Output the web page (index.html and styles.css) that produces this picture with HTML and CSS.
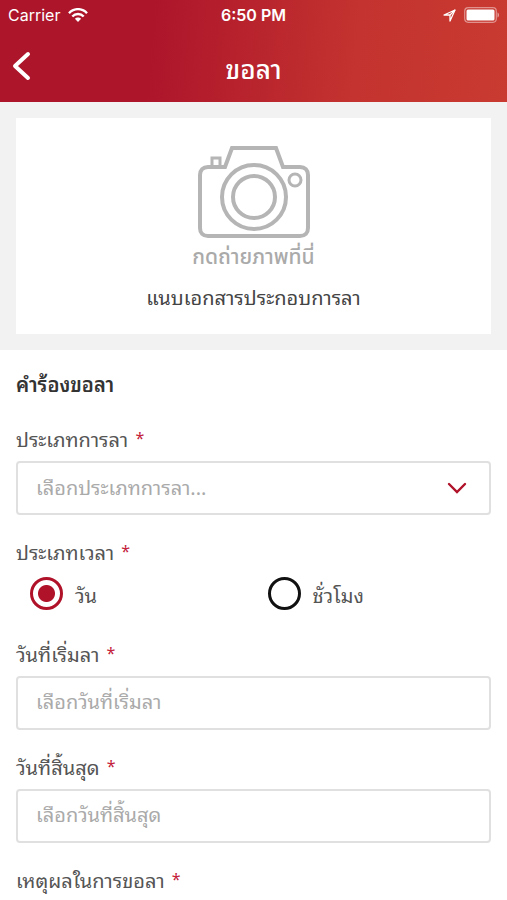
FILE: index.html
```
<!DOCTYPE html>
<html lang="th">
  <head>
    <meta charset="UTF-8" />
    <meta name="viewport" content="width=device-width, initial-scale=1.0" />
    <title>ขอลา</title>
    <link rel="stylesheet" href="styles.css">
  </head>
  <body>
    <header class="header">
      <div class="status-bar">
        <div class="carrier">
          <span>Carrier</span>
          <svg width="20" height="14" viewBox="0 0 20 14" fill="none" stroke="#fff" stroke-width="2.4">
            <path d="M1 5.2C6 -0.2 14 -0.2 19 5.2" />
            <path d="M4.3 8.5C7.4 5.2 12.6 5.2 15.7 8.5" />
            <path d="M10 14L6.9 10.8C8.6 9 11.4 9 13.1 10.8Z" fill="#fff" stroke="none" />
          </svg>
        </div>
        <span class="time">6:50 PM</span>
        <div class="indicators">
          <svg width="13" height="13" viewBox="0 0 13 13" fill="none" stroke="#fff" stroke-width="1.3" stroke-linejoin="round">
            <path d="M12 1L1 6H7V12Z" />
            <path d="M12 1L7 6" />
          </svg>
          <svg width="35" height="16" viewBox="0 0 35 16">
            <rect x="0.7" y="0.7" width="31.6" height="14.6" rx="3.5" fill="none" stroke="#fff" stroke-opacity="0.45" stroke-width="1.2" />
            <rect x="2.5" y="2.5" width="28" height="11" rx="1.5" fill="#fff" />
            <path d="M33.5 5.5C35.5 6 35.5 10 33.5 10.5Z" fill="#fff" fill-opacity="0.5" />
          </svg>
        </div>
      </div>
      <div class="nav-bar">
        <button type="button" class="back" aria-label="กลับ">
          <svg width="20" height="30" viewBox="0 0 20 30" fill="none" stroke="#fff" stroke-width="4" stroke-linecap="round" stroke-linejoin="round">
            <path d="M16 3L3 15L16 27" />
          </svg>
        </button>
        <h1>ขอลา</h1>
      </div>
    </header>

    <main>
      <section class="attach">
        <button type="button" class="attach-card">
          <svg width="112" height="92" viewBox="0 0 112 92" fill="none" stroke="#b5b5b5" stroke-width="4">
            <path d="M10 21H27L34 2H78L85 21H102C107 21 110 24 110 29V82C110 87 107 90 102 90H10C5 90 2 87 2 82V29C2 24 5 21 10 21Z" />
            <path d="M14 21V12H22V21" stroke-width="3" />
            <circle cx="56" cy="51" r="32" />
            <circle cx="56" cy="51" r="21" />
            <circle cx="97" cy="34" r="6" stroke-width="3" />
          </svg>
          <span class="attach-hint">กดถ่ายภาพที่นี่</span>
          <span class="attach-text">แนบเอกสารประกอบการลา</span>
        </button>
      </section>

      <form class="leave-form">
        <h2>คำร้องขอลา</h2>

        <div class="field">
          <label for="leave-type">ประเภทการลา <span class="required">*</span></label>
          <div class="select-box">
            <select id="leave-type">
              <option value="">เลือกประเภทการลา...</option>
            </select>
            <svg width="20" height="14" viewBox="0 0 20 14" fill="none" stroke="#b01229" stroke-width="2.4" stroke-linecap="round">
              <path d="M2 3L10 11L18 3" />
            </svg>
          </div>
        </div>

        <fieldset>
          <legend>ประเภทเวลา <span class="required">*</span></legend>
          <div class="options">
            <label class="option"><input type="radio" name="time-type" value="day" checked /> <span>วัน</span></label>
            <label class="option"><input type="radio" name="time-type" value="hour" /> <span>ชั่วโมง</span></label>
          </div>
        </fieldset>

        <div class="field">
          <label for="start-date">วันที่เริ่มลา <span class="required">*</span></label>
          <input type="text" id="start-date" placeholder="เลือกวันที่เริ่มลา" />
        </div>

        <div class="field">
          <label for="end-date">วันที่สิ้นสุด <span class="required">*</span></label>
          <input type="text" id="end-date" placeholder="เลือกวันที่สิ้นสุด" />
        </div>

        <div class="field">
          <label for="reason">เหตุผลในการขอลา <span class="required">*</span></label>
          <textarea id="reason" rows="4"></textarea>
        </div>
      </form>
    </main>
  </body>
</html>
```
FILE: styles.css
```
* {
  box-sizing: border-box;
}
body {
  font-family: "Noto Sans Thai Looped", Loma, Garuda, "Noto Sans Thai", "Noto Sans", sans-serif;
  font-size: 20px;
  line-height: 28px;
  display: flex;
  flex-direction: column;
  height: 100vh;
  margin: 0;
  color: #555;
  background-color: #fff;
}
svg {
  display: block;
}
button, input, select, textarea {
  font: inherit;
  margin: 0;
}
.header {
  flex: none;
  color: #fff;
  background: linear-gradient(95deg, #ad152b 0%, #ad152b 30%, #c4332f 70%, #c93a31 100%);
}
.status-bar {
  display: grid;
  grid-template-columns: 1fr auto 1fr;
  align-items: center;
  height: 30px;
  padding: 0 8px;
  font-family: Inter, "Liberation Sans", sans-serif;
  font-size: 16px;
}
.carrier, .indicators {
  display: flex;
  align-items: center;
  gap: 8px;
}
.indicators {
  justify-content: flex-end;
}
.time {
  font-weight: 600;
}
.nav-bar {
  display: grid;
  grid-template-columns: 44px 1fr 44px;
  align-items: center;
  height: 72px;
}
.back {
  padding: 0 0 0 12px;
  border: none;
  background: none;
  cursor: pointer;
}
h1 {
  margin: 0;
  padding-top: 2px;
  font-size: 26px;
  font-weight: 500;
  text-align: center;
}
main {
  flex: 1;
  overflow-y: auto;
  scrollbar-width: none;
}
.attach {
  padding: 16px;
  background-color: #f2f2f2;
}
.attach-card {
  display: flex;
  flex-direction: column;
  align-items: center;
  width: 100%;
  padding: 28px 16px 24px;
  border: none;
  color: #444;
  background-color: #fff;
  cursor: pointer;
}
.attach-hint {
  margin: 6px 0 10px;
  color: #aaa;
  font-family: "Noto Sans Thai", sans-serif;
  font-size: 21px;
  font-weight: 500;
}
.leave-form {
  padding: 19px 16px;
}
h2 {
  margin: 0 0 27px;
  color: #333;
  font-size: 20px;
  font-weight: 600;
  line-height: 28px;
}
.field {
  margin-bottom: 22px;
}
.field > label, legend {
  display: block;
  padding: 0;
  margin-bottom: 9px;
}
.required {
  margin-left: 2px;
  color: #c4213a;
  font-size: 16px;
  line-height: 16px;
  vertical-align: 3px;
}
input[type="text"], select, textarea {
  display: block;
  width: 100%;
  padding: 0 18px;
  border: 2px solid #e0e0e0;
  border-radius: 4px;
  color: #aaa;
  background-color: #fff;
}
input[type="text"], select {
  height: 54px;
}
input[type="text"] {
  padding-bottom: 6px;
}
select {
  padding-bottom: 4px;
}
::placeholder {
  color: #aaa;
  opacity: 1;
}
.select-box {
  position: relative;
}
.select-box select {
  appearance: none;
}
.select-box svg {
  position: absolute;
  top: 20px;
  right: 24px;
  pointer-events: none;
}
fieldset {
  min-width: 0;
  margin: 0 0 29px;
  padding: 0;
  border: none;
}
legend {
  margin-bottom: 0;
}
.options {
  display: grid;
  grid-template-columns: 1fr 1fr;
  padding-top: 12px;
}
.option {
  display: flex;
  align-items: center;
  gap: 12px;
  padding-left: 14px;
}
.option input {
  appearance: none;
  width: 33px;
  height: 33px;
  border: 3px solid #111;
  border-radius: 50%;
}
.option input:checked {
  border-color: #b01229;
  background: radial-gradient(circle, #b01229 8px, #fff 9px);
}
```
